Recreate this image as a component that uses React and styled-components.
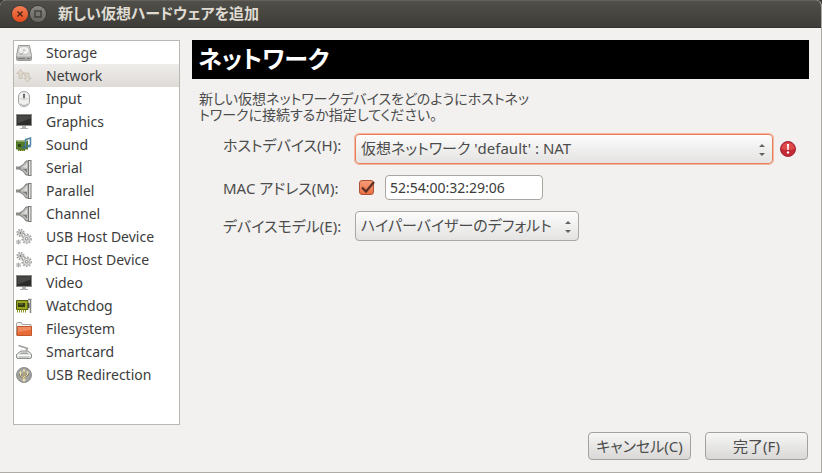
import React, { useState } from 'react';
import styled, { createGlobalStyle } from 'styled-components';

const hardware = [
  { name: 'Storage', icon: 'disk' },
  { name: 'Network', icon: 'network' },
  { name: 'Input', icon: 'mouse' },
  { name: 'Graphics', icon: 'monitor' },
  { name: 'Sound', icon: 'sound' },
  { name: 'Serial', icon: 'plug' },
  { name: 'Parallel', icon: 'plug' },
  { name: 'Channel', icon: 'plug' },
  { name: 'USB Host Device', icon: 'gears' },
  { name: 'PCI Host Device', icon: 'gears' },
  { name: 'Video', icon: 'monitor' },
  { name: 'Watchdog', icon: 'card' },
  { name: 'Filesystem', icon: 'folder' },
  { name: 'Smartcard', icon: 'reader' },
  { name: 'USB Redirection', icon: 'usb' },
];

const drawings = {
  disk: (
    <>
      <path d="M2.5.5h11l2 10v4q0 1-1 1h-13q-1 0-1-1v-4z" fill="#d6d6d4" stroke="#9a9a98" />
      <ellipse cx="8" cy="5.5" rx="5.5" ry="4.200" fill="#f2f2f2" stroke="#c0c0be" />
      <ellipse cx="8" cy="5.300" rx="1.500" ry="1" fill="#c2c2c0" />
      <path d="M3.500 10l4-2.500" stroke="#a5a5a3" />
      <path d="M1 11.500h14v3.500H1z" fill="#a9a9a7" />
      <path d="M2 13.500h7M11 13.500h3" stroke="#7b7b79" />
    </>
  ),
  network: (
    <g fill="#ded8cd" stroke="#c4bcae" strokeWidth=".8">
      <path d="M4.500 1.500L.8 5.500H3v5h3v-5h2.200z" />
      <path d="M11.500 14L15.200 10H13V5H8v2.500h2V10H7.800z" />
    </g>
  ),
  mouse: (
    <>
      <path d="M2.500 6c0-3.500 2-5.500 5.500-5.500s5.500 2 5.500 5.500v4c0 3.500-2.200 5.500-5.500 5.500s-5.500-2-5.500-5.500z" fill="#f0f0ef" stroke="#a3a3a1" />
      <path d="M3.500 7.500q4.500 2 9 0" stroke="#d0d0ce" fill="none" />
      <rect x="7" y="2.500" width="2" height="5" rx="1" fill="#6f6f6f" />
      <path d="M4.500 13q3.500 3 7 0" stroke="#bbb" fill="none" />
    </>
  ),
  monitor: (
    <>
      <rect x=".5" y=".5" width="15" height="11" fill="#2d2e2c" stroke="#8a8b88" />
      <path d="M1.500 1.500h13v3l-13 5z" fill="#484947" />
      <path d="M6 12h4v2H6z" fill="#b5b5b3" />
      <path d="M4 14.500h8" stroke="#b0b0ae" />
    </>
  ),
  sound: (
    <>
      <path d="M0 3.500h12v9H9V14H2v-1.500H0z" fill="#557a2b" />
      <path d="M1 4.500h10" stroke="#88a958" />
      <path d="M2 7h3v3H2z" fill="#2f4818" />
      <path d="M3 13.500h6" stroke="#c5a947" strokeDasharray="1 1" />
      <path d="M9.500 9.500V2.500l5-1.500v7.500" fill="none" stroke="#4d83a3" strokeWidth="1.500" />
      <ellipse cx="8.500" cy="10" rx="2" ry="1.500" fill="#3b6b88" />
      <ellipse cx="13" cy="9" rx="2" ry="1.500" fill="#4d83a3" />
    </>
  ),
  plug: (
    <>
      <path d="M0 8h5" stroke="#8b8d89" strokeWidth="3" />
      <path d="M4 6.500q3-.5 6-5.500h3v14h-3q-3-5-6-5.500z" fill="#b9bab7" stroke="#777975" />
      <path d="M6 7q3-.5 5-4v5z" fill="#dededc" />
      <path d="M6 9q3 .5 5 3.500V9z" fill="#7c7e7a" />
      <rect x="12.500" y=".5" width="2.500" height="15" fill="#e3e4e2" stroke="#777975" />
    </>
  ),
  gears: (
    <g fill="none">
      <circle cx="4.500" cy="4" r="3.300" stroke="#a5a5a3" strokeWidth="1.800" strokeDasharray="1.500 1.100" />
      <circle cx="4.500" cy="4" r="2.300" fill="#d6d6d5" stroke="#b3b3b1" />
      <circle cx="4.500" cy="4" r=".9" fill="#777" />
      <circle cx="10.700" cy="9.800" r="4.500" stroke="#a5a5a3" strokeWidth="1.600" strokeDasharray="1.700 1.300" />
      <circle cx="10.700" cy="9.800" r="3.500" fill="#dededd" stroke="#b3b3b1" />
      <circle cx="10.700" cy="9.800" r="1.300" fill="#fafafa" stroke="#888" />
      <path d="M.5 11l4 4M4.500 11l-4 4M2.500 10.500v5M0 13h5" stroke="#aaa" />
    </g>
  ),
  card: (
    <>
      <path d="M.5 2.500H12v9H.5z" fill="#9aa51c" stroke="#4e5a12" />
      <path d="M2 5h7v4H2z" fill="#303b12" />
      <path d="M3 6h4" stroke="#798442" />
      <path d="M1 13h10" stroke="#8b961c" strokeWidth="3" strokeDasharray="1 1" />
      <path d="M12 1.500h3.500M14.500 1v14" stroke="#83857f" strokeWidth="1.500" />
      <path d="M12.500 5v5" stroke="#454c3b" strokeWidth="2" />
    </>
  ),
  folder: (
    <>
      <path d="M.5 14V2.500q0-1 1-1h4l1 2h8.500V14z" fill="#ededeb" stroke="#a5a39d" />
      <path d="M2 5h12" stroke="#fff" />
      <path d="M1.500 5.500h14v9H1z" fill="#e76a37" stroke="#c2562b" />
      <path d="M2 6h13v3L2 11z" fill="#f08b5f" />
    </>
  ),
  reader: (
    <>
      <path d="M2.500 1.500l9 3-2 3.500" fill="none" stroke="#9b9e99" strokeWidth="1.500" />
      <path d="M3 3.500l6 4H6z" fill="#f1f1f0" />
      <path d="M.5 11q0-1 1-1.500L5 7h7l3 2.500q.5.500.5 1.500v2q0 1.500-1.500 1.500H2q-1.500 0-1.500-1.500z" fill="#dfe2df" stroke="#8c918c" />
      <path d="M5.500 8.500h5.500l1.500 1.500H4z" fill="#a2a7a3" />
      <path d="M1.500 11.500h13" stroke="#fff" />
      <path d="M3 13h10" stroke="#b0b5b1" />
    </>
  ),
  usb: (
    <>
      <circle cx="8" cy="8" r="7.500" fill="#9d9d9b" stroke="#8f8f8d" />
      <circle cx="8" cy="8" r="6" fill="#a5a5a3" />
      <path d="M8 3v10M4.500 6v2.500L8 11M11.500 5.500v2.500L8 10" fill="none" stroke="#6e6344" strokeWidth="2" />
      <path d="M8 3v10M4.500 6v2.500L8 11M11.500 5.500v2.500L8 10" fill="none" stroke="#efe4b0" />
      <path d="M8 1.500l1.500 3h-3z" fill="#efe4b0" />
      <circle cx="8" cy="13" r="1.500" fill="#efe4b0" />
      <circle cx="4.500" cy="5.800" r="1.200" fill="#efe4b0" />
      <path d="M10.500 4.500h2v2h-2z" fill="#efe4b0" />
    </>
  ),
};

const DeviceIcon = ({ name }) => (
  <svg width="16" height="16" viewBox="0 0 16 16" aria-hidden="true">
    {drawings[name]}
  </svg>
);

const Dropdown = ({ id, options, focused }) => (
  <SelectWrap>
    <Select id={id} $focused={focused}>
      {options.map(option => (
        <option key={option}>{option}</option>
      ))}
    </Select>
    <Arrows width="8" height="16" viewBox="0 0 8 16" aria-hidden="true">
      <path d="M1 5l3-3 3 3zM1 11l3 3 3-3z" fill="#62625e" />
    </Arrows>
  </SelectWrap>
);

const App = () => {
  const [selected, setSelected] = useState('Network');
  const [customMac, setCustomMac] = useState(true);
  const [mac, setMac] = useState('52:54:00:32:29:06');

  return (
    <>
      <GlobalStyle />
      <Window>
        <TitleBar>
          <WindowButton $close aria-label="閉じる">
            <svg width="16" height="16" viewBox="0 0 16 16">
              <path d="M5.500 5.500l5 5M10.500 5.500l-5 5" stroke="#4b2417" strokeWidth="1.300" />
            </svg>
          </WindowButton>
          <WindowButton aria-label="最大化">
            <svg width="16" height="16" viewBox="0 0 16 16">
              <rect x="5" y="5" width="6" height="6" fill="none" stroke="#3b3a36" strokeWidth="1.300" />
            </svg>
          </WindowButton>
          <WindowTitle>新しい仮想ハードウェアを追加</WindowTitle>
        </TitleBar>
        <Content>
          <HardwareList>
            {hardware.map(item => (
              <li key={item.name}>
                <HardwareItem $active={item.name === selected} onClick={() => setSelected(item.name)}>
                  <DeviceIcon name={item.icon} />
                  {item.name}
                </HardwareItem>
              </li>
            ))}
          </HardwareList>
          <Main>
            <Banner>ネットワーク</Banner>
            <Description>
              新しい仮想ネットワークデバイスをどのようにホストネッ
              <br />
              トワークに接続するか指定してください。
            </Description>
            <Form>
              <Label htmlFor="host" $top>ホストデバイス(H):</Label>
              <Field $grow>
                <Dropdown id="host" focused options={["仮想ネットワーク 'default' : NAT"]} />
                <svg width="16" height="16" viewBox="0 0 16 16" aria-hidden="true">
                  <circle cx="8" cy="8" r="7.500" fill="#c22936" stroke="#a52837" />
                  <path d="M1.500 8a6.500 6.500 0 0 1 13 0q-6 2-13 0z" fill="#e04c4c" />
                  <path d="M7 3h2l-.4 6H7.400z" fill="#fff" />
                  <circle cx="8" cy="11.500" r="1.200" fill="#fff" />
                </svg>
              </Field>
              <Label htmlFor="mac">MAC アドレス(M):</Label>
              <Field>
                <CheckWrap>
                  <Checkbox
                    type="checkbox"
                    aria-label="MAC アドレスを指定"
                    checked={customMac}
                    onChange={e => setCustomMac(e.target.checked)}
                  />
                  {customMac && (
                    <CheckMark width="16" height="16" viewBox="0 0 16 16" aria-hidden="true">
                      <path d="M3 7.500l4 4L15 2" fill="none" stroke="#5b3022" strokeWidth="2.200" />
                    </CheckMark>
                  )}
                </CheckWrap>
                <TextInput id="mac" value={mac} onChange={e => setMac(e.target.value)} />
              </Field>
              <Label htmlFor="model">デバイスモデル(E):</Label>
              <Field>
                <Dropdown id="model" options={['ハイパーバイザーのデフォルト']} />
              </Field>
            </Form>
          </Main>
        </Content>
        <Footer>
          <Button>キャンセル(C)</Button>
          <Button>完了(F)</Button>
        </Footer>
      </Window>
    </>
  );
};

export default App;

const GlobalStyle = createGlobalStyle`
  * {
    box-sizing: border-box;
  }

  body {
    margin: 0;
    background: #3c3b37;
    color: #4c4c4c;
    font-family: 'Noto Sans', 'Noto Sans CJK JP', sans-serif;
    font-size: 14px;
    font-feature-settings: 'palt';
  }

  button, input, select {
    font: inherit;
    font-feature-settings: inherit;
    color: inherit;
  }

  svg {
    display: block;
    flex-shrink: 0;
  }
`;

const Window = styled.div`
  display: flex;
  flex-direction: column;
  min-height: 100vh;
  background: #f2f1f0;
  border: solid #aeaba6;
  border-width: 0 1px 1px 0;
  border-radius: 6px 6px 0 0;
  overflow: hidden;
`;

const TitleBar = styled.header`
  display: flex;
  align-items: center;
  gap: 2px;
  height: 28px;
  margin-right: -1px;
  padding-left: 12px;
  background: linear-gradient(#504f49, #3d3c38);
  border-top: 1px solid #64625b;
  border-bottom: 1px solid #32312e;
`;

const WindowButton = styled.button`
  width: 16px;
  height: 16px;
  padding: 0;
  border: 0;
  border-radius: 50%;
  background: ${props => (props.$close ? 'linear-gradient(#f37e56, #e14b1d)' : 'linear-gradient(#888780, #666560)')};
  box-shadow: 0 0 0 1px #393834;
`;

const WindowTitle = styled.h1`
  margin: 0 0 0 10px;
  padding-bottom: 2px;
  color: #dfdbd2;
  font-size: 15px;
  line-height: 20px;
  font-weight: 700;
`;

const Content = styled.div`
  display: flex;
  flex: 1;
  gap: 12px;
  padding: 12px 12px 7px 13px;
`;

const HardwareList = styled.ul`
  width: 167px;
  flex-shrink: 0;
  margin: 0;
  padding: 0;
  list-style: none;
  background: #fff;
  border: 1px solid #bab7b2;
`;

const HardwareItem = styled.button`
  display: flex;
  align-items: center;
  gap: 14px;
  width: 100%;
  height: 23px;
  padding: 0 2px;
  border: 0;
  background: ${props => (props.$active ? 'linear-gradient(#efedeb, #dedbd7)' : 'none')};
  color: #3c3c3c;
  text-align: left;
  white-space: nowrap;
`;

const Main = styled.main`
  flex: 1;
  min-width: 0;
`;

const Banner = styled.h2`
  margin: 0;
  padding: 0 6px 2px;
  background: #000;
  color: #fff;
  font-size: 24px;
  line-height: 37px;
  font-weight: 700;
`;

const Description = styled.p`
  margin: 12px 0 11px 7px;
  line-height: 16px;
`;

const Form = styled.form`
  display: grid;
  grid-template-columns: 120px 1fr;
  align-items: center;
  column-gap: 12px;
  row-gap: 11px;
  padding: 0 13px 0 31px;
`;

const Label = styled.label`
  align-self: ${props => (props.$top ? 'start' : 'center')};
  font-size: 15px;
  line-height: 22px;
  white-space: nowrap;
`;

const Field = styled.div`
  display: flex;
  align-items: center;
  gap: 7px;

  > div:first-child {
    flex-grow: ${props => (props.$grow ? 1 : 0)};
  }
`;

const SelectWrap = styled.div`
  position: relative;
`;

const Select = styled.select`
  display: block;
  width: 100%;
  height: 30px;
  padding: 0 25px 2px 5px;
  appearance: none;
  background: linear-gradient(#fcfcfc, #e4e3e2);
  border: 1px solid ${props => (props.$focused ? '#e9805b' : '#aaa7a3')};
  border-radius: 4px;
  box-shadow: ${props => (props.$focused ? '0 0 0 1px #f3b7a1' : 'none')};
  font-size: 15px;
`;

const Arrows = styled.svg`
  position: absolute;
  top: 8px;
  right: 7px;
  pointer-events: none;
`;

const CheckWrap = styled.div`
  position: relative;
  margin: 0 4px;
`;

const Checkbox = styled.input`
  display: block;
  width: 15px;
  height: 15px;
  margin: 0;
  appearance: none;
  background: ${props => (props.checked ? 'linear-gradient(#f69b77, #ea7044)' : '#fff')};
  border: 1px solid #ad5234;
  border-radius: 3px;
`;

const CheckMark = styled.svg`
  position: absolute;
  top: 0;
  left: 0;
  pointer-events: none;
`;

const TextInput = styled.input`
  width: 158px;
  height: 25px;
  padding: 0 4px;
  background: #fff;
  border: 1px solid #a9a6a1;
  border-radius: 4px;
  color: #3c3c3c;
`;

const Footer = styled.footer`
  display: flex;
  justify-content: flex-end;
  gap: 14px;
  padding: 0 13px 12px;
`;

const Button = styled.button`
  width: 103px;
  height: 28px;
  padding: 0 0 2px;
  background: linear-gradient(#f6f6f5, #d9d8d7);
  border: 1px solid #a5a29e;
  border-radius: 4px;
  font-size: 15px;
  white-space: nowrap;
`;
